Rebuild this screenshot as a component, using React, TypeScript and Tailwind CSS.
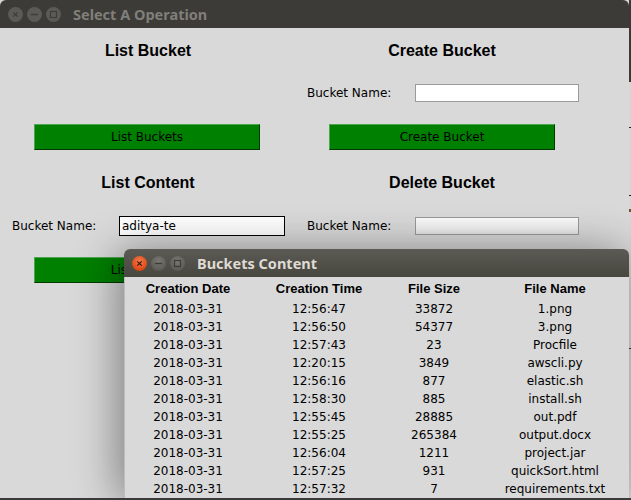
import React from "react";

function Circle({ kind, active }: { kind: "close" | "min" | "max"; active: boolean }) {
  const isClose = kind === "close" && active;
  const bg = isClose
    ? "bg-[radial-gradient(circle_at_50%_35%,#f47a4c,#dd4814_70%,#b83a10)]"
    : active
    ? "bg-[radial-gradient(circle_at_50%_35%,#7a7873,#5e5c57_70%,#4d4c48)]"
    : "bg-[#5b5a56]";
  const stroke = isClose ? "#3a1406" : active ? "#3c3b37" : "#3e3d39";
  return (
    <div className={`w-[15px] h-[15px] rounded-full flex items-center justify-center ${bg}`}>
      <svg width="15" height="15" viewBox="0 0 15 15">
        {kind === "close" && (
          <path d="M5.3 5.3 L9.7 9.7 M9.7 5.3 L5.3 9.7" stroke={stroke} strokeWidth="1.2" fill="none" />
        )}
        {kind === "min" && <path d="M4 7.5 H11" stroke={stroke} strokeWidth="1.4" fill="none" />}
        {kind === "max" && (
          <rect x="4.5" y="4.5" width="6" height="6" stroke={stroke} strokeWidth="1.2" fill="none" />
        )}
      </svg>
    </div>
  );
}

function GreenButton({ label, className }: { label: string; className: string }) {
  return (
    <div
      className={`h-[26px] w-[226px] bg-[#008000] border border-t-[#4da64d] border-l-[#4da64d] border-b-[#003a00] border-r-[#003a00] flex items-center justify-center text-[12px] text-black font-['DejaVu_Sans',sans-serif] ${className}`}
    >
      {label}
    </div>
  );
}

function Entry({ value, focused, disabledLook }: { value?: string; focused?: boolean; disabledLook?: boolean }) {
  return (
    <div
      className={`w-[166px] h-[20px] border ${focused ? "border-black" : "border-[#d9d9d9]"}`}
    >
      <div
        className={`w-full h-full ${focused ? "border border-white" : "border border-[#9a9a9a]"} ${
          disabledLook ? "bg-[linear-gradient(#fbfbfb,#f2f2f2_60%,#e4e4e4)]" : "bg-white"
        } flex items-center pl-[1px] text-[12px] text-black font-['DejaVu_Sans',sans-serif] leading-none`}
      >
        {value}
      </div>
    </div>
  );
}

const heading = "text-[16px] leading-[18px] font-bold text-black font-['Liberation_Sans',Arial,sans-serif] text-center";
const label = "text-[12px] text-black font-['DejaVu_Sans',sans-serif] w-[107px] shrink-0";

const rows: [string, string, string, string][] = [
  ["2018-03-31", "12:56:47", "33872", "1.png"],
  ["2018-03-31", "12:56:50", "54377", "3.png"],
  ["2018-03-31", "12:57:43", "23", "Procfile"],
  ["2018-03-31", "12:20:15", "3849", "awscli.py"],
  ["2018-03-31", "12:56:16", "877", "elastic.sh"],
  ["2018-03-31", "12:58:30", "885", "install.sh"],
  ["2018-03-31", "12:55:45", "28885", "out.pdf"],
  ["2018-03-31", "12:55:25", "265384", "output.docx"],
  ["2018-03-31", "12:56:04", "1211", "project.jar"],
  ["2018-03-31", "12:57:25", "931", "quickSort.html"],
  ["2018-03-31", "12:57:32", "7", "requirements.txt"],
];

export default function App() {
  return (
    <div className="relative w-[631px] h-[500px] overflow-hidden bg-[#d7d7d7]">
      {/* background window bits on right edge */}
      <div className="absolute right-0 top-0 w-[2px] h-[82px] bg-[#3a3935]" />
      <div className="absolute right-0 top-[127px] w-[2px] h-[1px] bg-[#222]" />
      <div className="absolute right-0 top-[195px] w-[2px] h-[1px] bg-[#222]" />
      <div className="absolute right-0 top-[209px] w-[2px] h-[3px] bg-[#6a5a2a]" />
      <div className="absolute right-0 top-[348px] w-[2px] h-[1px] bg-[#333]" />

      {/* Main window */}
      <div className="absolute left-0 top-0 w-[629px] h-[498px] flex flex-col rounded-t-[6px] overflow-hidden">
        <div className="h-[28px] shrink-0 bg-[#3c3b37] flex items-center pl-[8px]">
          <div className="flex gap-[4px]">
            <Circle kind="close" active={false} />
            <Circle kind="min" active={false} />
            <Circle kind="max" active={false} />
          </div>
          <span className="ml-[12px] text-[14.5px] font-bold text-[#807f7a] font-['Noto_Sans',sans-serif] leading-none">
            Select A Operation
          </span>
        </div>
        <div className="flex-1 bg-[#d9d9d9] flex flex-col">
          {/* headings */}
          <div className="flex mt-[14px] h-[18px]">
            <div className={`w-[296px] ${heading}`}>List Bucket</div>
            <div className={`w-[292px] ${heading}`}>Create Bucket</div>
          </div>
          {/* create entry */}
          <div className="flex mt-[23px] h-[20px]">
            <div className="w-[296px]" />
            <div className="flex items-center pl-[11px]">
              <span className={label}>Bucket Name:</span>
              <Entry />
            </div>
          </div>
          {/* buttons */}
          <div className="flex mt-[21px] h-[26px]">
            <div className="w-[296px] flex">
              <GreenButton label="List Buckets" className="ml-[34px]" />
            </div>
            <div className="flex">
              <GreenButton label="Create Bucket" className="ml-[33px]" />
            </div>
          </div>
          {/* headings 2 */}
          <div className="flex mt-[24px] h-[18px]">
            <div className={`w-[296px] ${heading}`}>List Content</div>
            <div className={`w-[292px] ${heading}`}>Delete Bucket</div>
          </div>
          {/* entries 2 */}
          <div className="flex mt-[24px] h-[20px]">
            <div className="w-[296px] flex items-center pl-[12px]">
              <span className={label}>Bucket Name:</span>
              <Entry value="aditya-te" focused />
            </div>
            <div className="flex items-center pl-[11px]">
              <span className={label}>Bucket Name:</span>
              <Entry disabledLook />
            </div>
          </div>
          {/* buttons 2 */}
          <div className="flex mt-[21px] h-[26px]">
            <div className="w-[296px] flex">
              <GreenButton label="List Content" className="ml-[34px]" />
            </div>
            <div className="flex">
              <GreenButton label="Delete Bucket" className="ml-[33px]" />
            </div>
          </div>
        </div>
      </div>

      {/* Popup window */}
      <div className="absolute left-[124px] top-[249px] w-[505px] h-[249px] flex flex-col rounded-t-[6px] shadow-[-6px_2px_44px_rgba(0,0,0,0.42)]">
        <div className="h-[28px] shrink-0 rounded-t-[6px] bg-[linear-gradient(#5c5a54,#47463f)] flex items-center pl-[8px]">
          <div className="flex gap-[4px]">
            <Circle kind="close" active />
            <Circle kind="min" active />
            <Circle kind="max" active />
          </div>
          <span className="ml-[12px] text-[14.5px] font-bold text-[#dfdbd2] font-['Noto_Sans',sans-serif] leading-none">
            Buckets Content
          </span>
        </div>
        <div className="flex-1 bg-[#d9d9d9] border-l border-[#bdbdbd]">
          <div className="grid grid-cols-[126px_136px_94px_148px] mt-[2px] h-[18px] items-center text-[13px] font-bold text-black font-['Liberation_Sans',Arial,sans-serif] text-center">
            <div>Creation Date</div>
            <div>Creation Time</div>
            <div>File Size</div>
            <div>File Name</div>
          </div>
          <div className="mt-[3px]">
            {rows.map((r, i) => (
              <div
                key={i}
                className="grid grid-cols-[126px_136px_94px_148px] h-[18px] items-center text-[12px] text-black font-['DejaVu_Sans',sans-serif] text-center"
              >
                <div>{r[0]}</div>
                <div>{r[1]}</div>
                <div>{r[2]}</div>
                <div>{r[3]}</div>
              </div>
            ))}
          </div>
        </div>
      </div>

      {/* bottom edge */}
      <div className="absolute left-0 bottom-0 w-full h-[2px] bg-[#3a3a3a]" />
    </div>
  );
}
